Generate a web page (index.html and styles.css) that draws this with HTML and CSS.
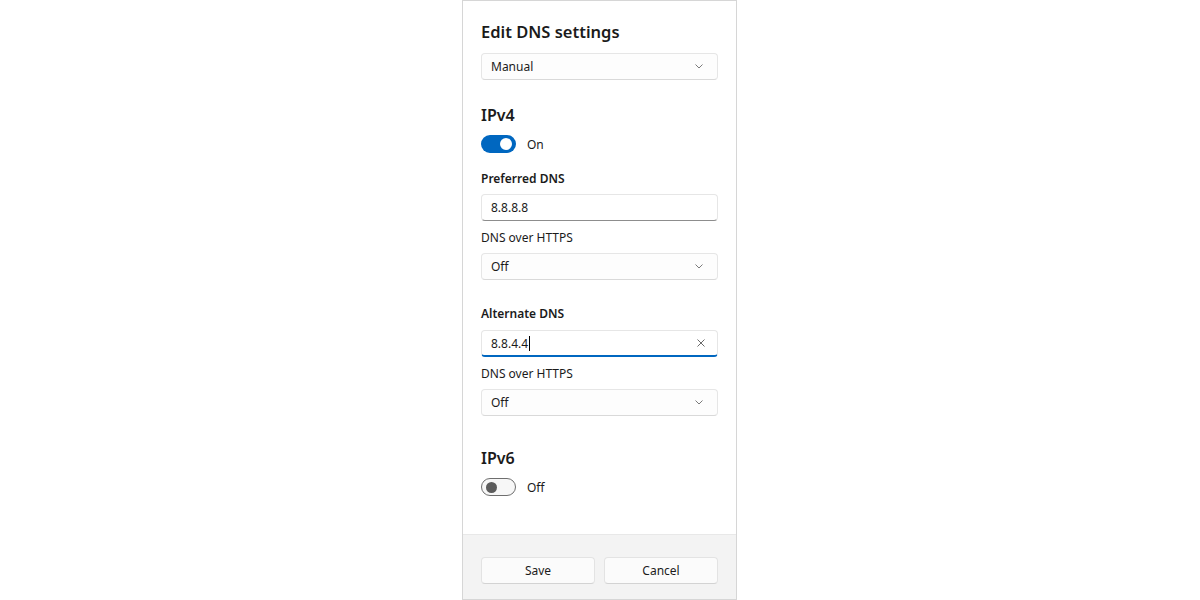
FILE: index.html
```html
<!DOCTYPE html>
<html lang="en">
<head>
<meta charset="utf-8">
<title>Edit DNS settings</title>
<link rel="stylesheet" href="styles.css">
</head>
<body>
<div class="panel">
  <div class="content">
    <h1 class="title">Edit DNS settings</h1>
    <div class="select first">
      <span>Manual</span>
      <svg class="chev" width="8" height="5" viewBox="0 0 8 5"><path d="M0.5 0.5 L4 4 L7.5 0.5" fill="none" stroke="#7a7a7a" stroke-width="1"/></svg>
    </div>

    <h2 class="section">IPv4</h2>
    <div class="toggle-row">
      <span class="toggle on"><span class="knob"></span></span>
      <span class="toggle-label">On</span>
    </div>

    <div class="label strong pref">Preferred DNS</div>
    <div class="textbox"><span>8.8.8.8</span></div>
    <div class="label">DNS over HTTPS</div>
    <div class="select">
      <span>Off</span>
      <svg class="chev" width="8" height="5" viewBox="0 0 8 5"><path d="M0.5 0.5 L4 4 L7.5 0.5" fill="none" stroke="#7a7a7a" stroke-width="1"/></svg>
    </div>

    <div class="label strong alt">Alternate DNS</div>
    <div class="textbox focused"><span>8.8.4.4<span class="caret"></span></span>
      <svg class="clear" width="8" height="8" viewBox="0 0 8 8"><path d="M0.5 0.5 L7.5 7.5 M7.5 0.5 L0.5 7.5" stroke="#6a6a6a" stroke-width="1"/></svg>
    </div>
    <div class="label">DNS over HTTPS</div>
    <div class="select">
      <span>Off</span>
      <svg class="chev" width="8" height="5" viewBox="0 0 8 5"><path d="M0.5 0.5 L4 4 L7.5 0.5" fill="none" stroke="#7a7a7a" stroke-width="1"/></svg>
    </div>

    <h2 class="section v6">IPv6</h2>
    <div class="toggle-row">
      <span class="toggle off"><span class="knob"></span></span>
      <span class="toggle-label">Off</span>
    </div>
  </div>
  <div class="footer">
    <button class="btn">Save</button>
    <button class="btn">Cancel</button>
  </div>
</div>
</body>
</html>
```

FILE: styles.css
```css
html, body {
  margin: 0;
  padding: 0;
  background: #ffffff;
}
body {
  font-family: "Noto Sans", "Open Sans", sans-serif;
  color: #1b1b1b;
}
.panel {
  width: 273px;
  height: 598px;
  margin-left: calc(50% - 138px);
  border: 1px solid #d6d6d6;
  display: flex;
  flex-direction: column;
  background: #ffffff;
}
.content {
  flex: 1;
  padding: 19px 18px 0 18px;
  display: flex;
  flex-direction: column;
}
.title {
  margin: 0;
  font-size: 16.5px;
  font-weight: 600;
  line-height: 24px;
}
.select, .textbox {
  height: 25px;
  border: 1px solid #e6e6e6;
  border-radius: 4px;
  display: flex;
  align-items: center;
  justify-content: space-between;
  padding: 0 14px 0 9px;
  font-size: 12px;
  box-sizing: content-box;
}
.select {
  background: #fdfdfd;
  border-bottom-color: #d9d9d9;
  margin-top: 5px;
}
.select.first {
  margin-top: 9px;
}
.chev {
  display: block;
}
.textbox {
  background: #ffffff;
  border-bottom-color: #8d8d8d;
  margin-top: 5px;
}
.textbox.focused {
  border-bottom: 2px solid #0067c0;
  height: 24px;
  margin-top: 6px;
  padding-right: 12px;
}
.caret {
  display: inline-block;
  width: 1px;
  height: 15px;
  background: #000;
  vertical-align: -3px;
  margin-left: 1px;
}
.clear {
  display: block;
}
.section {
  margin: 23px 0 0 0;
  font-size: 16px;
  font-weight: 600;
  line-height: 24px;
}
.section.v6 {
  margin-top: 30px;
}
.toggle-row {
  margin-top: 7px;
  height: 20px;
  display: flex;
  align-items: center;
}
.toggle {
  width: 35px;
  height: 18px;
  border-radius: 9px;
  box-sizing: border-box;
  display: flex;
  align-items: center;
  padding: 0 4px;
}
.toggle.on {
  background: #0067c0;
  justify-content: flex-end;
}
.toggle.on .knob {
  width: 12px;
  height: 12px;
  border-radius: 50%;
  background: #ffffff;
}
.toggle.off {
  background: #f7f7f7;
  border: 1px solid #6e6e6e;
  justify-content: flex-start;
}
.toggle.off .knob {
  width: 11px;
  height: 11px;
  border-radius: 50%;
  background: #5c5c5c;
}
.toggle-label {
  margin-left: 11px;
  font-size: 12px;
}
.label {
  margin-top: 7px;
  font-size: 12px;
  line-height: 20px;
}
.label.strong {
  font-weight: 600;
}
.label.pref {
  margin-top: 15px;
}
.label.alt {
  margin-top: 24px;
}
.footer {
  height: 65px;
  background: #f3f3f3;
  border-top: 1px solid #e8e8e8;
  box-sizing: border-box;
  padding: 22px 18px 0 18px;
  display: flex;
  gap: 9px;
}
.btn {
  flex: 1;
  height: 27px;
  border: 1px solid #e3e3e3;
  border-bottom-color: #d3d3d3;
  border-radius: 4px;
  background: #fbfbfb;
  font-family: "Noto Sans", "Open Sans", sans-serif;
  font-size: 12px;
  color: #1b1b1b;
  padding: 0;
}
```
